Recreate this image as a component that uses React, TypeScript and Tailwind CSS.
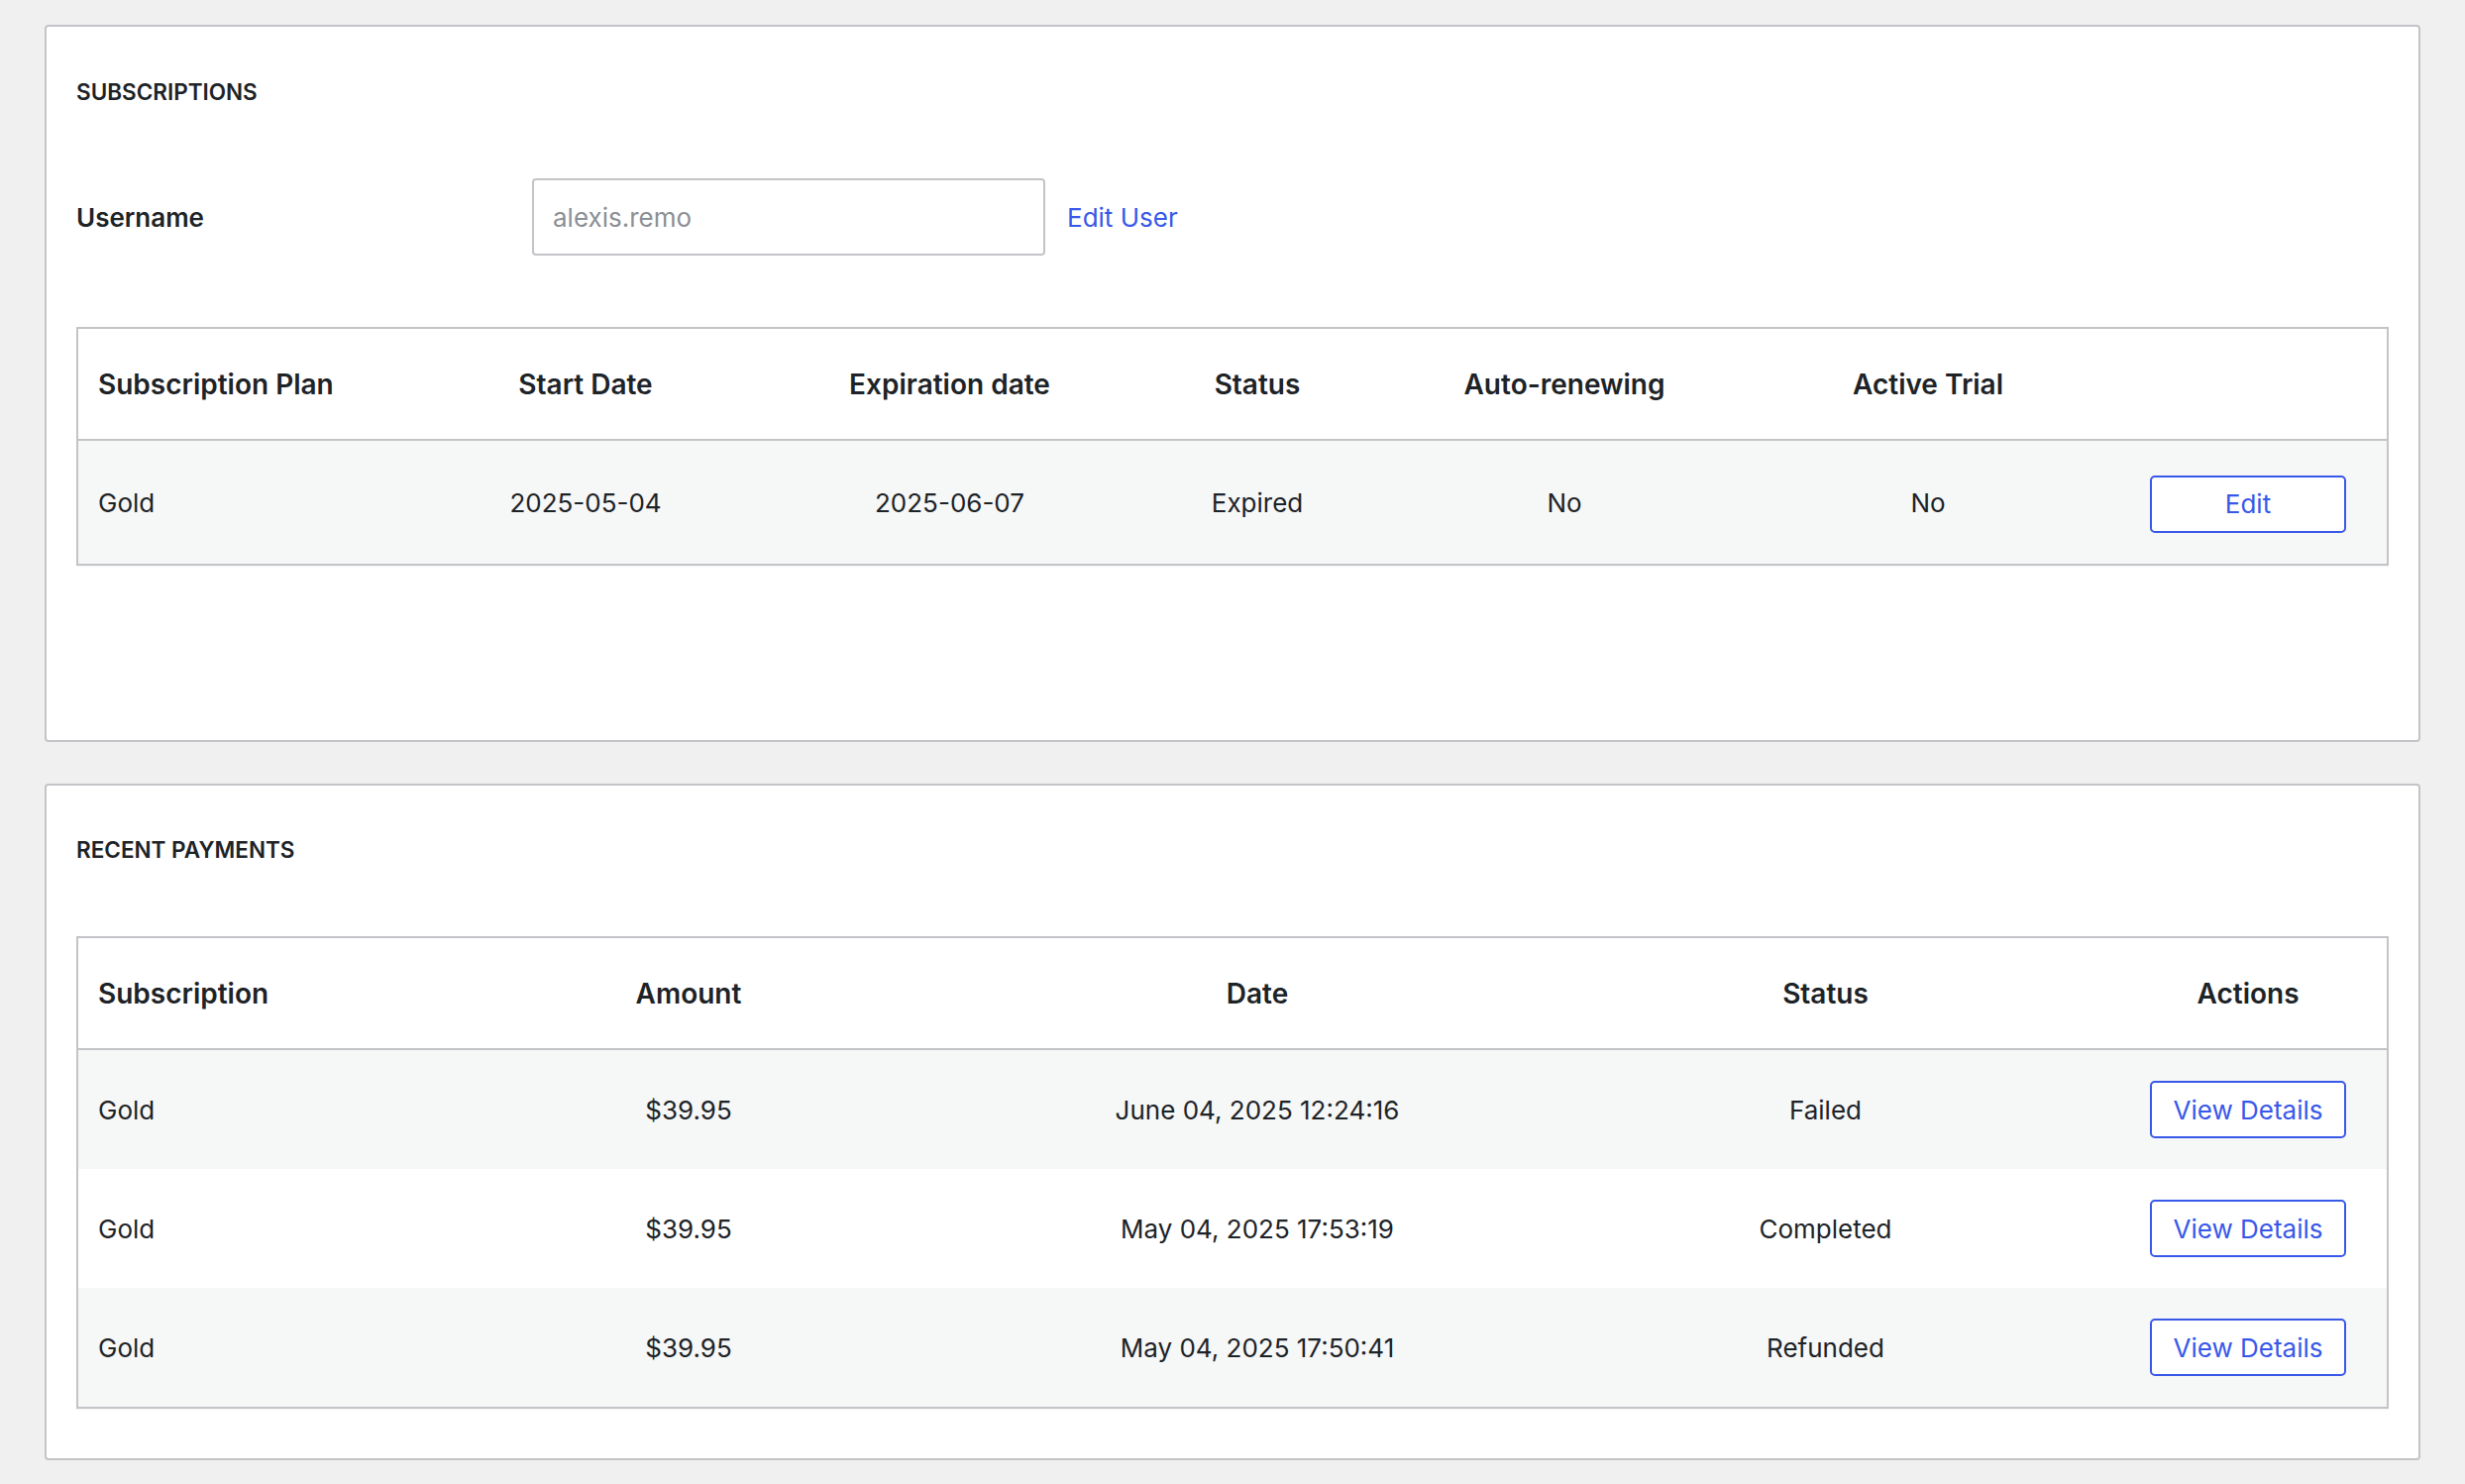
import React from "react";

// column tracks for the two tables (inner width 2330)
const subCols = "grid-cols-[329px_366px_369px_252px_368px_366px_280px]";
const payCols = "grid-cols-[329px_574px_574px_573px_280px]";

const subscriptions = [
  { plan: "Gold", start: "2025-05-04", end: "2025-06-07", status: "Expired", renew: "No", trial: "No" },
];

const payments = [
  { sub: "Gold", amount: "$39.95", date: "June 04, 2025 12:24:16", status: "Failed" },
  { sub: "Gold", amount: "$39.95", date: "May 04, 2025 17:53:19", status: "Completed" },
  { sub: "Gold", amount: "$39.95", date: "May 04, 2025 17:50:41", status: "Refunded" },
];

export default function App() {
  return (
    <div className="min-h-screen bg-[#f0f0f1] px-[45px] pt-[25px] pb-[25px] font-['Inter',sans-serif] text-[#1d2327]">
      <div className="flex flex-col gap-[42px]">

        {/* --- Subscriptions --- */}
        <div className="bg-white border-2 border-[#c3c4c7] rounded-[4px] px-[30px] pt-[51px] pb-[176px]">
          <h2 className="text-[22.5px] leading-[30px] font-semibold uppercase">Subscriptions</h2>

          <div className="mt-[72px] flex items-center h-[78px]">
            <label className="w-[460px] text-[26px] font-semibold">Username</label>
            <input
              readOnly
              placeholder="alexis.remo"
              className="w-[518px] h-[78px] border-2 border-[#c3c4c7] rounded-[4px] px-[19px] text-[26px] placeholder:text-[#8c8f94] outline-none"
            />
            <a href="#" className="ml-[22px] text-[26px] text-[#3858e9]">Edit User</a>
          </div>

          <div className="mt-[72px] border-2 border-[#c3c4c7] shadow-[0_1px_1px_rgba(0,0,0,0.04)]">
            <div className={`grid ${subCols} h-[113px] items-center border-b-2 border-[#c3c4c7] text-[28px] font-semibold`}>
              <div className="pl-[20px]">Subscription Plan</div>
              <div className="text-center">Start Date</div>
              <div className="text-center">Expiration date</div>
              <div className="text-center">Status</div>
              <div className="text-center">Auto-renewing</div>
              <div className="text-center">Active Trial</div>
              <div />
            </div>
            {subscriptions.map((s, i) => (
              <div key={i} className={`grid ${subCols} h-[124px] items-center bg-[#f6f7f7] text-[26px]`}>
                <div className="pl-[20px]">{s.plan}</div>
                <div className="text-center">{s.start}</div>
                <div className="text-center">{s.end}</div>
                <div className="text-center">{s.status}</div>
                <div className="text-center">{s.renew}</div>
                <div className="text-center">{s.trial}</div>
                <div className="flex justify-center pt-[3px]">
                  <ActionButton label="Edit" />
                </div>
              </div>
            ))}
          </div>
        </div>

        {/* --- Recent Payments --- */}
        <div className="bg-white border-2 border-[#c3c4c7] rounded-[4px] px-[30px] pt-[50px] pb-[50px]">
          <h2 className="text-[22.5px] leading-[30px] font-semibold uppercase">Recent Payments</h2>

          <div className="mt-[72px] border-2 border-[#c3c4c7] shadow-[0_1px_1px_rgba(0,0,0,0.04)]">
            <div className={`grid ${payCols} h-[113px] items-center border-b-2 border-[#c3c4c7] text-[28px] font-semibold`}>
              <div className="pl-[20px]">Subscription</div>
              <div className="text-center">Amount</div>
              <div className="text-center">Date</div>
              <div className="text-center">Status</div>
              <div className="text-center">Actions</div>
            </div>
            {payments.map((p, i) => (
              <div
                key={i}
                className={`grid ${payCols} h-[120px] items-center text-[26px] ${i % 2 === 0 ? "bg-[#f6f7f7]" : "bg-white"}`}
              >
                <div className="pl-[20px]">{p.sub}</div>
                <div className="text-center">{p.amount}</div>
                <div className="text-center">{p.date}</div>
                <div className="text-center">{p.status}</div>
                <div className="flex justify-center">
                  <ActionButton label="View Details" />
                </div>
              </div>
            ))}
          </div>
        </div>

      </div>
    </div>
  );
}

function ActionButton({ label }: { label: string }) {
  return (
    <button className="w-[198px] h-[58px] border-2 border-[#3858e9] rounded-[5px] bg-white text-[26px] text-[#3858e9]">
      {label}
    </button>
  );
}
